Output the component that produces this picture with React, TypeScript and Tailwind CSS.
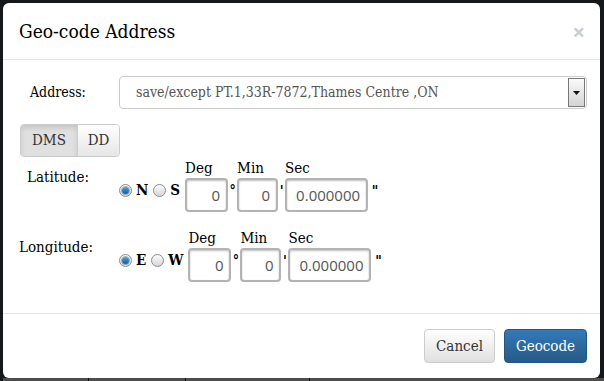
import React from 'react'

const serif: React.CSSProperties = {
  fontFamily: '"DejaVu Serif", "Liberation Serif", serif',
  fontStretch: 'semi-condensed',
}
const sans: React.CSSProperties = { fontFamily: '"Open Sans", "DejaVu Sans", sans-serif', fontStretch: 'normal' }

const Radio: React.FC<{ checked?: boolean }> = ({ checked }) => (
  <span className="relative inline-flex h-[13px] w-[13px] items-center justify-center rounded-full border border-[#8c8c8c] bg-gradient-to-b from-[#fbfbfb] to-[#d6d6d6]">
    {checked && (
      <span className="h-[7px] w-[7px] rounded-full bg-gradient-to-b from-[#4aa3e0] to-[#0f5c9c] shadow-[0_0_0_1px_rgba(20,60,100,0.35)]" />
    )}
  </span>
)

const NumInput: React.FC<{ value: string; w: string }> = ({ value, w }) => (
  <div
    className={`${w} flex h-[34px] items-center justify-end rounded-[4px] border-2 border-[#b3b3b3] bg-white pr-[6px] text-[15px] text-[#555] shadow-[inset_0_1px_2px_rgba(0,0,0,0.25)]`}
    style={sans}
  >
    {value}
  </div>
)

type Col = { head: string; value: string; w: string; sym: string; symW: string }

const CoordRow: React.FC<{
  label: string
  labelPad: string
  dirs: [string, string]
  cols: Col[]
}> = ({ label, labelPad, dirs, cols }) => (
  <div className="flex items-start">
    <div className={`w-[101px] pt-[7px] text-[15px] text-black ${labelPad}`}>{label}</div>
    <div className="mt-[15px] flex h-[33px] items-center text-[15px] font-bold text-black">
      <Radio checked />
      <span className="ml-[4px]">{dirs[0]}</span>
      <span className="ml-[5px] inline-flex">
        <Radio />
      </span>
      <span className="ml-[4px] mr-[5px]">{dirs[1]}</span>
    </div>
    {cols.map((c) => (
      <div key={c.head} className="flex flex-col">
        <div className="h-[19px] text-[15px] leading-[19px] text-black">{c.head}</div>
        <div className="flex items-start">
          <NumInput value={c.value} w={c.w} />
          <span className={`${c.symW} pt-[6px] text-center text-[14px] font-bold leading-none text-black`}>
            {c.sym}
          </span>
        </div>
      </div>
    ))}
  </div>
)

const App: React.FC = () => {
  const cols: Col[] = [
    { head: 'Deg', value: '0', w: 'w-[43px]', sym: '°', symW: 'w-[9px]' },
    { head: 'Min', value: '0', w: 'w-[41px]', sym: "'", symW: 'w-[7px]' },
    { head: 'Sec', value: '0.000000', w: 'w-[83px]', sym: '"', symW: 'w-[14px]' },
  ]

  return (
    <div className="flex h-[381px] w-[604px] flex-col overflow-hidden bg-[#15181b] pt-[3px]" style={serif}>
      {/* Modal */}
      <div className="ml-[3px] mr-[4px] flex h-[375px] flex-col rounded-[6px] bg-white">
        {/* Header */}
        <div className="flex h-[57px] items-center justify-between border-b border-[#e5e5e5] pl-[16px] pr-[15px]">
          <h4 className="text-[19px] text-black">Geo-code Address</h4>
          <span className="text-[22px] font-bold leading-none text-[#cccccc]" style={sans}>
            ×
          </span>
        </div>

        {/* Body */}
        <div className="flex-1 pl-[15px] pr-[13px] pt-[16px]">
          <div className="flex h-[33px] items-center">
            <div className="w-[101px] pl-[12px] text-[14px] text-black">Address:</div>
            <div className="relative flex h-[33px] flex-1 items-center rounded-[4px] border border-[#ccc] pl-[16px] text-[14px] text-[#555]">
              save/except PT.1,33R-7872,Thames Centre ,ON
              <div className="absolute right-[1px] top-[1px] flex h-[29px] w-[17px] items-center justify-center border border-[#777] bg-gradient-to-b from-[#fafafa] to-[#d4d4d4]">
                <svg width="7" height="4" viewBox="0 0 7 4">
                  <path d="M0 0h7L3.5 4z" fill="#111" />
                </svg>
              </div>
            </div>
          </div>

          {/* DMS / DD toggle */}
          <div className="ml-[2px] mt-[15px] flex h-[33px] w-[100px] overflow-hidden rounded-[4px] border border-[#ccc] text-[15px] text-[#333]">
            <div className="flex w-[56px] items-center justify-center bg-[#e0e0e0] shadow-[inset_0_3px_5px_rgba(0,0,0,0.12)]">
              DMS
            </div>
            <div className="flex flex-1 items-center justify-center border-l border-[#ccc] bg-gradient-to-b from-white to-[#e6e6e6]">
              DD
            </div>
          </div>

          <div className="mt-[2px]">
            <CoordRow label="Latitude:" labelPad="pl-[9px]" dirs={['N', 'S']} cols={cols} />
          </div>
          <div className="mt-[17px]">
            <CoordRow label="Longitude:" labelPad="pl-[1px]" dirs={['E', 'W']} cols={cols} />
          </div>
        </div>

        {/* Footer */}
        <div className="flex h-[65px] items-center justify-end gap-[9px] border-t border-[#e5e5e5] pr-[13px]">
          <button className="h-[34px] w-[71px] rounded-[4px] border border-[#ccc] bg-gradient-to-b from-white to-[#e0e0e0] text-[15px] text-[#333]">
            Cancel
          </button>
          <button className="h-[34px] w-[83px] rounded-[4px] border border-[#245580] bg-gradient-to-b from-[#337ab7] to-[#265a88] text-[15px] text-white">
            Geocode
          </button>
        </div>
      </div>

      {/* page behind the overlay */}
      <div className="ml-[3px] flex h-[3px] bg-[#4d4d4d]">
        <div className="w-[86px] border-r border-[#111]" />
        <div className="w-[97px] border-r border-[#111]" />
        <div className="w-[124px] border-r border-[#111]" />
      </div>
    </div>
  )
}

export default App
